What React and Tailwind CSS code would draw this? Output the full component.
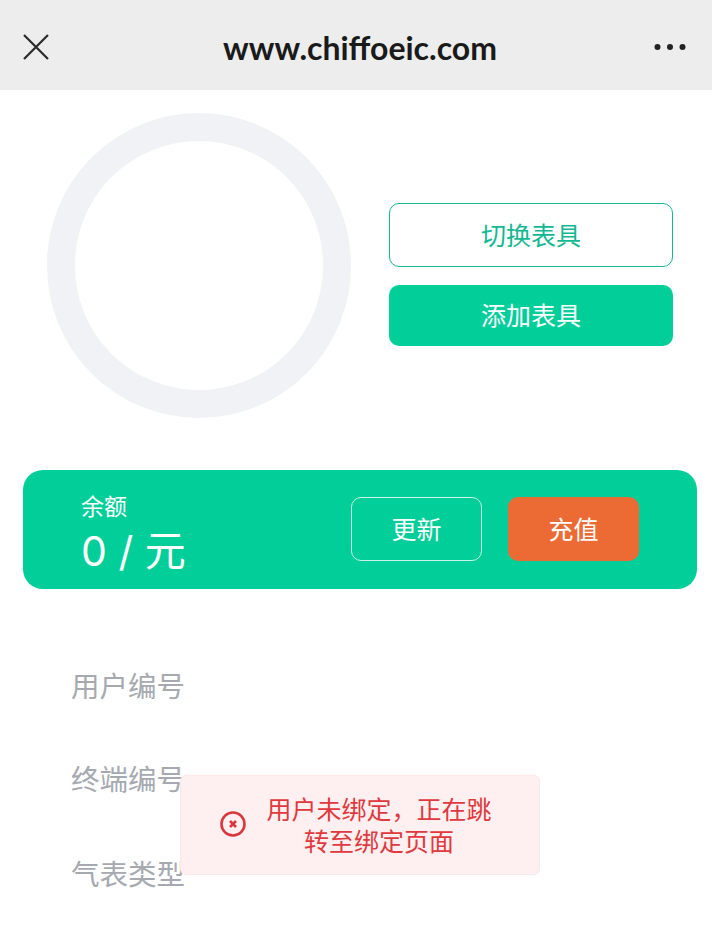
import React from 'react';

const cjk = "font-['Inter','Noto_Sans_CJK_SC',sans-serif]";

function Header() {
  return (
    <div className="flex h-[90px] items-center justify-between bg-[#ededed] pl-[22px] pr-[26px] pt-[4px]">
      <svg width="28" height="28" viewBox="0 0 28 28" fill="none" stroke="#2a2a2a" strokeWidth="2.2">
        <path d="M2 2L26 26M26 2L2 26" />
      </svg>
      <div className="ml-[16px] pt-[1px] text-[32px] font-bold leading-none text-[#1a1a1a] font-['Lato',sans-serif]">
        www.chiffoeic.com
      </div>
      <svg width="32" height="8" viewBox="0 0 32 8" fill="#222222">
        <circle cx="3.5" cy="4" r="3" />
        <circle cx="16" cy="4" r="3" />
        <circle cx="28.5" cy="4" r="3" />
      </svg>
    </div>
  );
}

function InfoRow({ label, className }) {
  return <div className={`pl-[71px] text-[28.5px] leading-[40px] text-[#a6a9b0] ${className}`}>{label}</div>;
}

export default function App() {
  return (
    <div className={`relative h-[941px] w-[712px] overflow-hidden bg-white ${cjk}`}>
      <Header />

      <div className="flex items-center pl-[47px] pt-[23px]">
        <div className="h-[305px] w-[304px] rounded-full border-[28px] border-[#f0f2f6]" />
        <div className="ml-[38px] mt-[18px] flex w-[284px] flex-col gap-[18px]">
          <button className="h-[64px] rounded-[10px] border border-[#14b896] bg-white pt-[3px] text-[25px] text-[#12b892]">
            切换表具
          </button>
          <button className="h-[61px] rounded-[10px] bg-[#02ce9a] pt-[3px] text-[25px] text-white">添加表具</button>
        </div>
      </div>

      <div className="ml-[23px] mr-[15px] mt-[52px] flex h-[119px] items-center rounded-[20px] bg-[#02ce9a] pb-[1px] pl-[58px] pr-[58px] text-white">
        <div className="flex-1 pt-[9px]">
          <div className="text-[23px] leading-[28px]">余额</div>
          <div className="mt-[6px] text-[41px] leading-[48px]">0 / 元</div>
        </div>
        <button className="h-[64px] w-[131px] rounded-[10px] border border-[#c6f3e6] pt-[4px] text-[25px]">更新</button>
        <button className="ml-[26px] h-[64px] w-[131px] rounded-[10px] bg-[#ec6a33] pt-[3px] text-[25px]">充值</button>
      </div>

      <InfoRow label="用户编号" className="mt-[78px]" />
      <InfoRow label="终端编号" className="mt-[53px]" />
      <InfoRow label="气表类型" className="mt-[55px]" />

      {/* toast */}
      <div className="absolute left-[180px] top-[775px] flex h-[100px] w-[360px] items-center rounded-[6px] border border-[#fde8e8] bg-[#fef0f0] pl-[38px]">
        <svg width="28" height="28" viewBox="0 0 28 28" fill="none" className="mt-[-3px] shrink-0" stroke="#d9363e">
          <circle cx="14" cy="14" r="11.5" strokeWidth="2.6" />
          <path d="M11 11L17 17M17 11L11 17" strokeWidth="2.6" />
        </svg>
        <div className="ml-[12px] w-[240px] pt-[2px] text-center text-[25px] leading-[32px] text-[#e0393e]">
          用户未绑定，正在跳转至绑定页面
        </div>
      </div>
    </div>
  );
}
